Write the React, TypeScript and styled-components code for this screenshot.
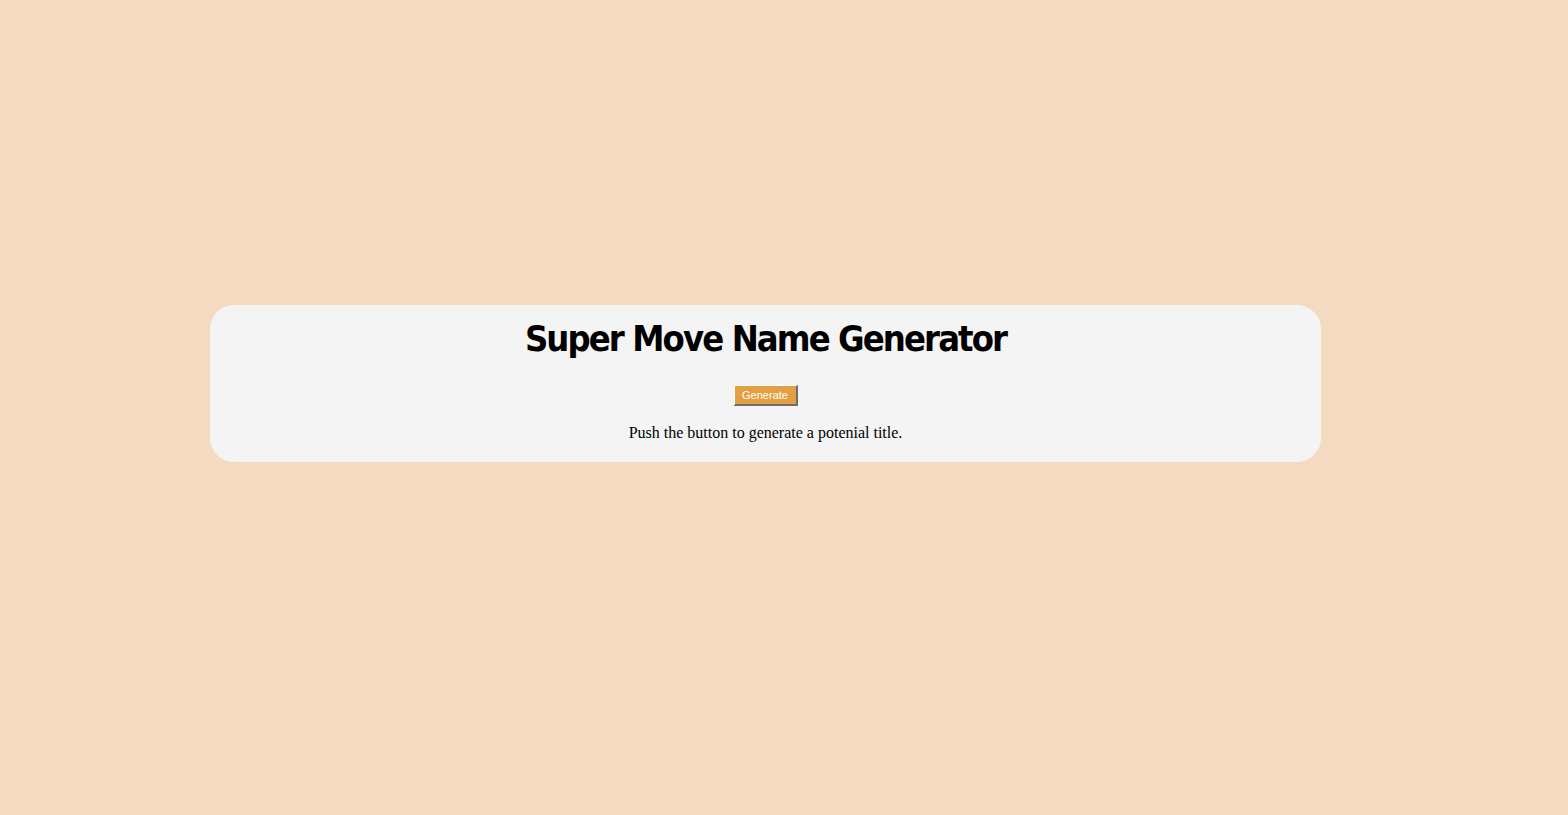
import styled, { createGlobalStyle } from "styled-components";

const GlobalStyle = createGlobalStyle`
  html, body {
    margin: 0;
    padding: 0;
    background-color: #f3dac1;
  }
`;

const Page = styled.div`
  box-sizing: border-box;
  height: 815px;
  display: flex;
  align-items: center;
  justify-content: center;
  padding: 0 37px 48px 0;
`;

const Card = styled.div`
  box-sizing: border-box;
  width: 1111px;
  height: 157px;
  background-color: #f4f4f4;
  border-radius: 24px;
  display: flex;
  flex-direction: column;
  align-items: center;
  padding-top: 12px;
`;

const Title = styled.h1`
  margin: 0;
  font-family: "DejaVu Sans Condensed", "DejaVu Sans", sans-serif;
  font-weight: 700;
  font-size: 36px;
  letter-spacing: -1.9px;
  line-height: 44px;
  color: #000;
`;

const Button = styled.button`
  margin-top: 24px;
  width: 64px;
  height: 21px;
  padding: 0;
  font-family: "Liberation Sans", Arial, sans-serif;
  font-size: 11px;
  font-weight: 500;
  color: #fff;
  background-color: #e3a043;
  border-style: solid;
  border-width: 1px 2px 2px 1px;
  border-color: #ffffff #6e6e6e #6e6e6e #ffffff;
`;

const Message = styled.p`
  margin: 17px 0 0;
  font-family: "Liberation Serif", "Times New Roman", serif;
  font-size: 16px;
  line-height: 20px;
  color: #000;
`;

export default function App() {
  return (
    <>
      <GlobalStyle />
      <Page>
        <Card>
          <Title>Super Move Name Generator</Title>
          <Button type="button">Generate</Button>
          <Message>Push the button to generate a potenial title.</Message>
        </Card>
      </Page>
    </>
  );
}
